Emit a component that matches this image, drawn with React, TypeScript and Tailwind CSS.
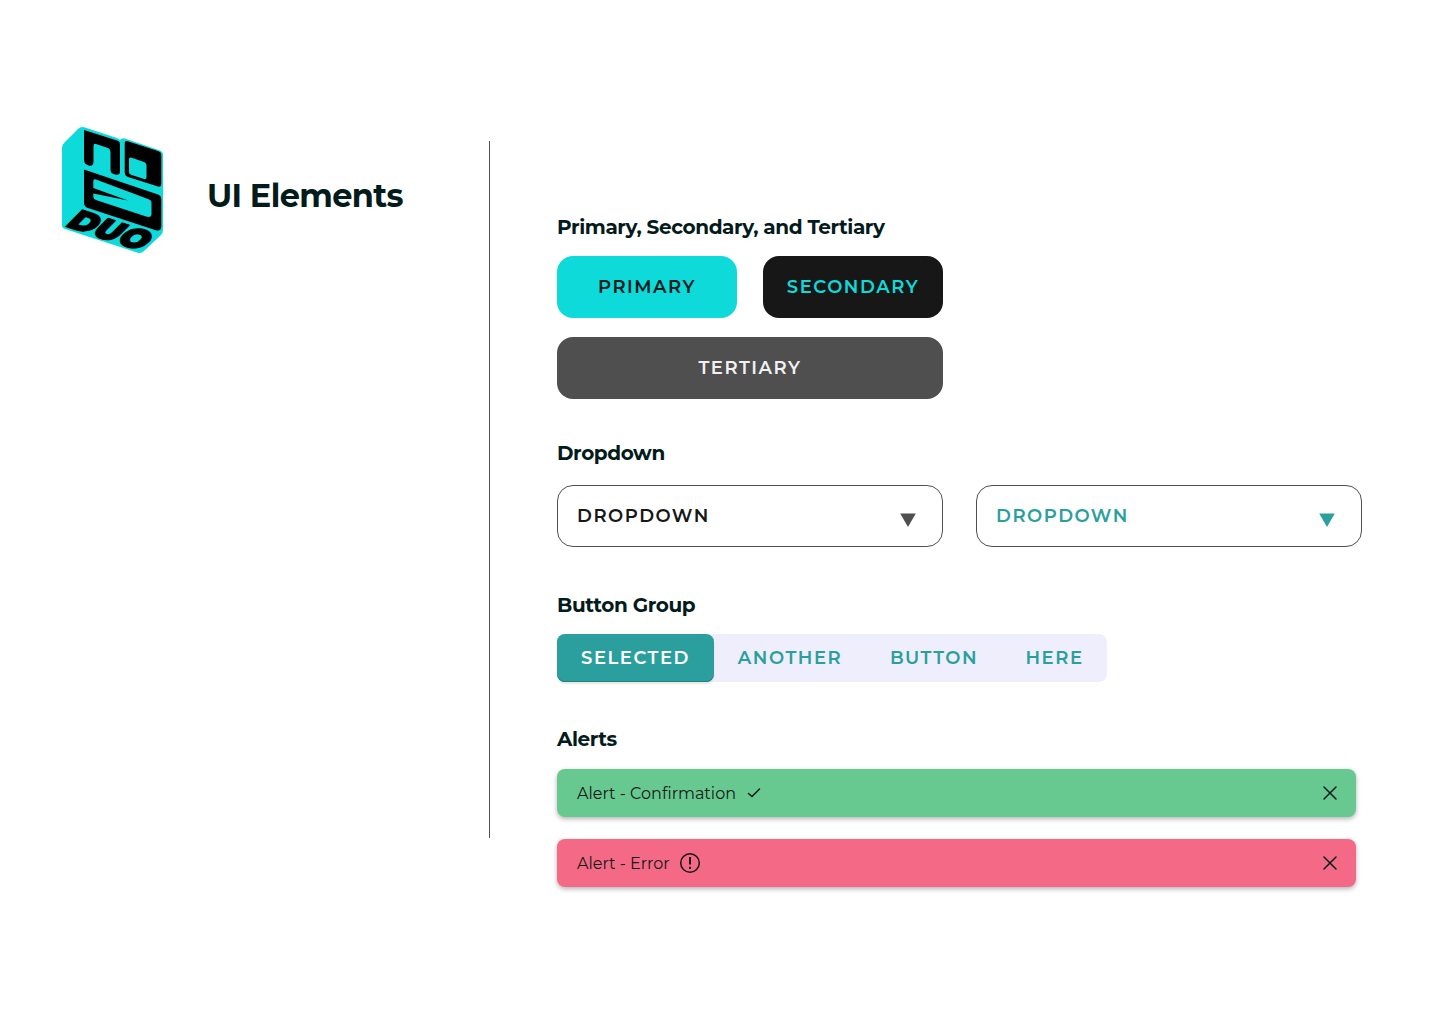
import { ReactNode, useState } from "react";
import clsx from "clsx";

const groupItems = ["SELECTED", "ANOTHER", "BUTTON", "HERE"];

function Logo() {
    return (
        <svg className="w-[104px] h-[132px] shrink-0 overflow-visible" viewBox="0 0 104 132" role="img" aria-label="No. 5 Duo">
            <path
                d="M18 5Q21 2 25 3.5L57 14Q59 15 60 16Q62 13.500 65 14.500L100 26.500Q103 27.500 103 31V106Q103 109 101 111L84 127Q81 130 77 128.500L5 105Q2 104 2 101V24Q2 21 4 19Z"
                fill="#0edad9"
            />
            <path
                d="M24 6L57 16.500Q60 17.500 60 20V47Q60 52 55 50.500Q50.500 49.500 50.500 46V28Q50.500 25 48 24L36 20Q33.500 19 33.500 22V38Q33.500 42.500 28.500 41.500Q24 40 24 36Z"
                fill="#000"
            />
            <path
                fillRule="evenodd"
                d="M67 17L98 27Q101.300 28 101.300 31V60Q101.300 63.500 98 62.500L68 53Q64.700 52 64.700 48V19Q64.700 16.500 67 17ZM71 33.500Q69 33 69 35V48Q69 50 71 50.700L84 55Q86.500 56 86.500 53V41Q86.500 39 84 38Z"
                fill="#000"
            />
            <path
                fillRule="evenodd"
                d="M24 45.500L98 70.500Q101.300 71.500 101.300 75V102Q101.300 108 95 106L28 84Q24 82.500 24 79ZM36 55.500Q33.300 54.500 33.300 57V64L68 76.500L33.300 69.500V73Q33.300 75 36 76L86 92.500Q91.500 94 91.500 90V79Q91.500 76 88 75Z"
                fill="#000"
            />
            <text
                transform="matrix(1.04 0.34 -0.8 0.8 4 102)"
                className="font-black text-[30px]"
                fill="#000"
                stroke="#000"
                strokeWidth="1"
                strokeLinejoin="round"
            >
                DUO
            </text>
        </svg>
    );
}

function Section({ title, className, children }: { title: string; className?: string; children: ReactNode }) {
    return (
        <section className={clsx("flex flex-col", className)}>
            <h2 className="text-xl leading-7 font-bold tracking-[-0.02em] text-[#031b1b]">{title}</h2>
            {children}
        </section>
    );
}

function Dropdown({ label, className }: { label: string; className: string }) {
    return (
        <div className={clsx("relative w-full max-w-[386px]", className)}>
            <select
                aria-label={label}
                className="w-full h-[62px] appearance-none rounded-2xl border border-[#4f4f4f] bg-white pl-[19px] pr-12 text-lg font-semibold tracking-[0.085em]"
            >
                <option>DROPDOWN</option>
            </select>
            <svg className="absolute right-[27px] top-7 w-4 h-[14px] pointer-events-none" viewBox="0 0 16 14">
                <path d="M0.200 0.500H15.800L8 14Z" className="fill-(--arrow)" />
            </svg>
        </div>
    );
}

function Alert({ text, icon, className }: { text: string; icon: ReactNode; className: string }) {
    return (
        <div
            role="alert"
            className={clsx("flex items-center h-12 rounded-lg pl-5 pr-4 text-[#171717] shadow-[0_2px_5px_rgba(0,0,0,0.3)]", className)}
        >
            <span className="pt-0.5 text-base">{text}</span>
            {icon}
            <button type="button" aria-label="Close" className="ml-auto">
                <svg className="size-5" viewBox="0 0 20 20" fill="none" stroke="#031b1b" strokeWidth="1.500">
                    <path d="M4 4L16 16M16 4L4 16" strokeLinecap="round" />
                </svg>
            </button>
        </div>
    );
}

export default function App() {
    const [selected, setSelected] = useState("SELECTED");
    const button = "h-[62px] rounded-2xl text-lg font-semibold tracking-[0.085em]";

    return (
        <main className="flex items-start min-h-screen bg-white font-['Montserrat','Inter',sans-serif]">
            <aside className="w-[489px] shrink-0 pt-[124px] pl-[60px]">
                <div className="flex items-center gap-[43px]">
                    <Logo />
                    <h1 className="pt-3 text-[32px] leading-10 font-bold tracking-[-0.02em] text-[#031b1b]">UI Elements</h1>
                </div>
            </aside>
            <div className="mt-[141px] w-px h-[697px] shrink-0 bg-[#4f4f4f]" />
            <div className="flex-1 pt-[213px] pb-16 pl-[67px] pr-[78px]">
                <Section title="Primary, Secondary, and Tertiary" className="gap-[15px]">
                    <div className="grid grid-cols-2 gap-x-[26px] gap-y-[19px] max-w-[386px]">
                        <button type="button" className={clsx(button, "bg-[#0edad9] text-[#031b1b]")}>PRIMARY</button>
                        <button type="button" className={clsx(button, "bg-[#171717] text-[#0edad9]")}>SECONDARY</button>
                        <button type="button" className={clsx(button, "col-span-2 bg-[#4f4f4f] text-[#f1f1f1]")}>TERTIARY</button>
                    </div>
                </Section>

                <Section title="Dropdown" className="mt-10 gap-[18px]">
                    <div className="flex gap-[33px]">
                        <Dropdown label="Dropdown" className="text-[#171717] [--arrow:#4f4f4f]" />
                        <Dropdown label="Active dropdown" className="text-[#2a9f9d] [--arrow:#2a9f9d]" />
                    </div>
                </Section>

                <Section title="Button Group" className="mt-11 gap-[15px]">
                    <div className="grid grid-cols-[157px_152px_136px_105px] w-fit rounded-lg bg-[#efeefd]">
                        {groupItems.map((item) => (
                            <button
                                key={item}
                                type="button"
                                onClick={() => setSelected(item)}
                                className={clsx(
                                    "h-12 rounded-lg text-lg font-semibold tracking-[0.085em]",
                                    item === selected
                                        ? "bg-[#2a9f9d] text-white shadow-[inset_0_-1px_0_#1d8280,0_2px_2px_rgba(0,0,0,0.1)]"
                                        : "text-[#2a9f9d]"
                                )}
                            >
                                {item}
                            </button>
                        ))}
                    </div>
                </Section>

                <Section title="Alerts" className="mt-[43px] mr-1.5 gap-4">
                    <div className="flex flex-col gap-[22px]">
                        <Alert
                            text="Alert - Confirmation"
                            className="bg-[#67c98f]"
                            icon={
                                <svg className="ml-[10px] size-4" viewBox="0 0 16 16" fill="none" stroke="#171717" strokeWidth="1.500">
                                    <path d="M2.500 8.500L6 11.500L13.500 4" strokeLinecap="round" />
                                </svg>
                            }
                        />
                        <Alert
                            text="Alert - Error"
                            className="bg-[#f46a86]"
                            icon={
                                <svg className="ml-2 size-6" viewBox="0 0 24 24" fill="none" stroke="#171717">
                                    <circle cx="12" cy="12" r="9.300" strokeWidth="1.500" />
                                    <path d="M12 6V13.500M12 15.700V18" strokeWidth="2" />
                                </svg>
                            }
                        />
                    </div>
                </Section>
            </div>
        </main>
    );
}
